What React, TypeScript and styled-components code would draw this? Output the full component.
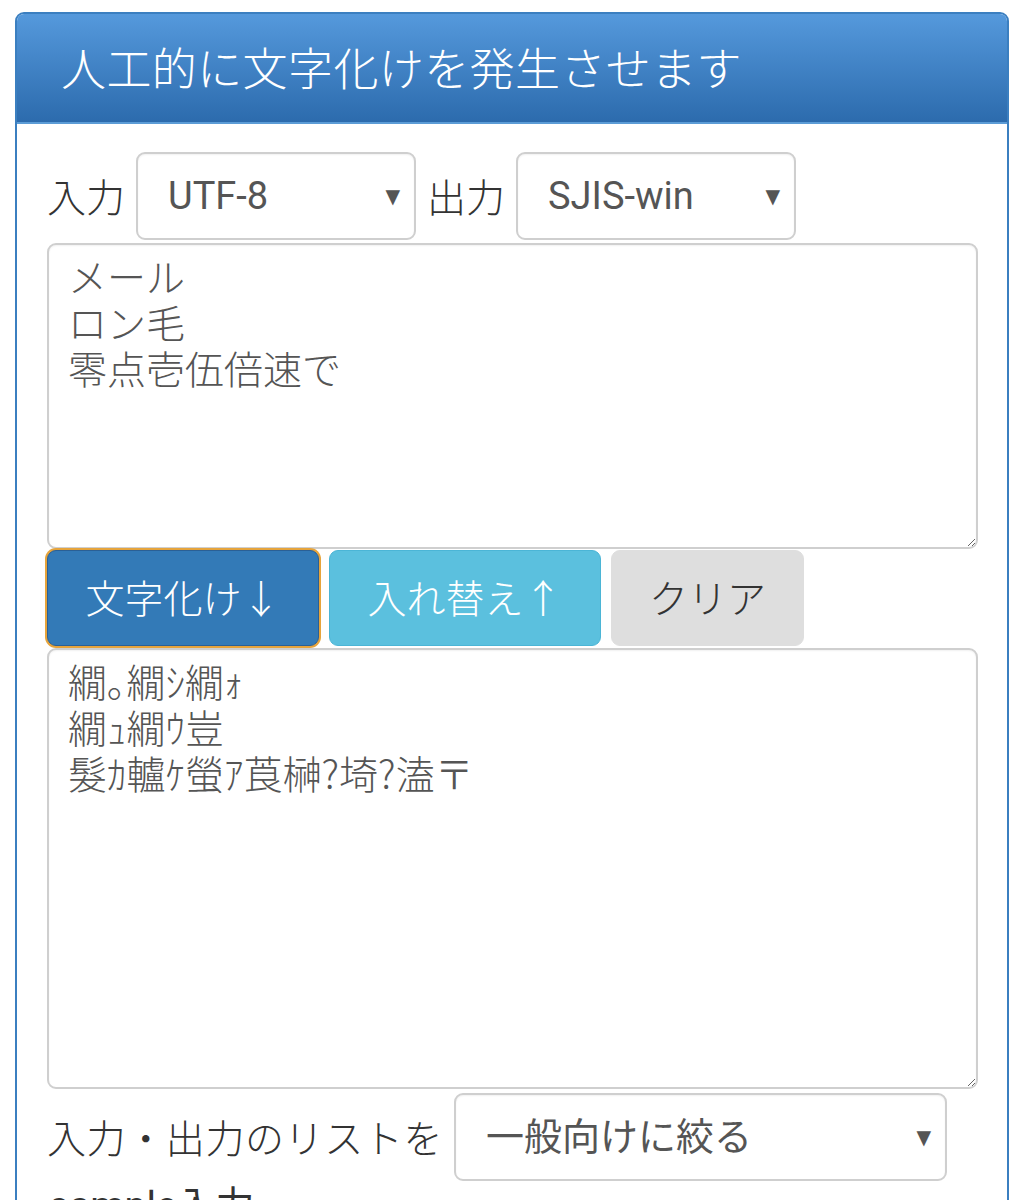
import React from "react"
import styled, { createGlobalStyle } from "styled-components"

const GlobalStyle = createGlobalStyle`
    body {
        margin: 0;
        background: #fff;
        font-family: Roboto, "Noto Sans CJK JP", sans-serif;
        color: #333;
    }
`

const Page = styled.div`
    padding: 12px 16px 0 15px;
    height: 1200px;
    overflow: hidden;
    box-sizing: border-box;
`

const Panel = styled.section`
    border: 2px solid #3b7fc0;
    border-radius: 9px;
    overflow: hidden;
    background: #fff;
`

const PanelHeading = styled.header`
    height: 108px;
    display: flex;
    align-items: center;
    padding-left: 44px;
    background: linear-gradient(#5599dc, #2c6bad);
    border-bottom: 2px solid #5c9cd6;
`

const Title = styled.h1`
    margin: 0 0 4px;
    font-family: "Noto Sans CJK JP", sans-serif;
    font-weight: 300;
    font-size: 45px;
    color: #fff;
    letter-spacing: 0.4px;
`

const PanelBody = styled.div`
    padding: 28px 29px 0 30px;
    display: flex;
    flex-direction: column;
`

const Row = styled.div<{ $gap?: number }>`
    display: flex;
    align-items: center;
    gap: 10px;
    margin-top: ${p => p.$gap ?? 0}px;
`

const Label = styled.span<{ $lead?: number; $spacing?: number }>`
    font-family: "Noto Sans CJK JP", sans-serif;
    font-weight: 300;
    font-size: 39px;
    color: #333;
    line-height: 1;
    padding-bottom: 2px;
    margin-left: ${p => p.$lead ?? 0}px;
    margin-right: 1px;
    letter-spacing: ${p => p.$spacing ?? 0}px;
`

const SelectWrap = styled.div<{ $width: number }>`
    position: relative;
    width: ${p => p.$width}px;
    height: 88px;

    &::after {
        content: "▼";
        position: absolute;
        right: 16px;
        top: 50%;
        transform: translateY(-50%) scaleX(0.95);
        font-family: "DejaVu Sans", sans-serif;
        font-size: 20px;
        color: #555;
        pointer-events: none;
    }
`

const Select = styled.select`
    appearance: none;
    width: 100%;
    height: 100%;
    box-sizing: border-box;
    border: 2px solid #cfcfcf;
    border-radius: 9px;
    background: #fff;
    padding: 0 40px 0 30px;
    font-family: Roboto, "Noto Sans CJK JP", sans-serif;
    font-weight: 400;
    font-size: 38px;
    color: #555;
    box-shadow: inset 0 1px 2px rgba(0, 0, 0, 0.06);
    outline: none;
`

const TextArea = styled.textarea<{ $height: number }>`
    display: block;
    width: 100%;
    height: ${p => p.$height}px;
    box-sizing: border-box;
    margin: 0;
    border: 2px solid #cfcfcf;
    border-radius: 9px;
    padding: 7px 19px;
    font-family: "Noto Sans CJK JP", sans-serif;
    font-weight: 300;
    font-size: 39px;
    line-height: 46px;
    color: #555;
    background: #fff;
    box-shadow: inset 0 1px 2px rgba(0, 0, 0, 0.06);
    resize: vertical;
    outline: none;
`

const ButtonRow = styled.div`
    display: flex;
    gap: 10px;
    margin: 1px 0 2px -2px;
`

const variants = {
    primary: "background: #337ab7; color: #fff; border-color: #2a6096; box-shadow: 0 0 0 2px #e6a43c;",
    info: "background: #5bc0de; color: #fff; border-color: #4bb5d6;",
    plain: "background: #dedede; color: #333; border-color: #dedede;",
}

const Button = styled.button<{ $variant: keyof typeof variants; $width: number }>`
    width: ${p => p.$width}px;
    height: 96px;
    border: 1px solid;
    border-radius: 9px;
    font-family: "Noto Sans CJK JP", sans-serif;
    font-weight: 300;
    font-size: 39px;
    padding: 0 0 4px;
    cursor: pointer;
    ${p => variants[p.$variant]}

    &:first-child {
        margin-left: 2px;
    }
`

const Cutoff = styled.div`
    margin-top: 2px;
    padding-left: 2px;
    font-size: 39px;
    line-height: 46px;
    color: #333;
    font-family: Roboto, "Noto Sans CJK JP", sans-serif;
`

const App = () => (
    <Page>
        <GlobalStyle />
        <Panel>
            <PanelHeading>
                <Title>人工的に文字化けを発生させます</Title>
            </PanelHeading>
            <PanelBody>
                <Row>
                    <Label>入力</Label>
                    <SelectWrap $width={280}>
                        <Select defaultValue="UTF-8">
                            <option>UTF-8</option>
                            <option>SJIS-win</option>
                        </Select>
                    </SelectWrap>
                    <Label $lead={1}>出力</Label>
                    <SelectWrap $width={280}>
                        <Select defaultValue="SJIS-win">
                            <option>UTF-8</option>
                            <option>SJIS-win</option>
                        </Select>
                    </SelectWrap>
                </Row>
                <Row $gap={3}>
                    <TextArea
                        $height={306}
                        readOnly
                        defaultValue={"メール\nロン毛\n零点壱伍倍速で"}
                    />
                </Row>
                <ButtonRow>
                    <Button $variant="primary" $width={272}>文字化け↓</Button>
                    <Button $variant="info" $width={272}>入れ替え↑</Button>
                    <Button $variant="plain" $width={193}>クリア</Button>
                </ButtonRow>
                <TextArea
                    $height={441}
                    readOnly
                    defaultValue={"繝｡繝ｼ繝ｫ\n繝ｭ繝ｳ豈\n髮ｶ轤ｹ螢ｱ莨榊?埼?溘〒"}
                />
                <Row $gap={4}>
                    <Label $spacing={0.6}>入力・出力のリストを</Label>
                    <SelectWrap $width={493}>
                        <Select defaultValue="general">
                            <option value="general">一般向けに絞る</option>
                            <option value="all">すべて表示</option>
                        </Select>
                    </SelectWrap>
                </Row>
                <Cutoff>sample入力</Cutoff>
            </PanelBody>
        </Panel>
    </Page>
)

export default App
